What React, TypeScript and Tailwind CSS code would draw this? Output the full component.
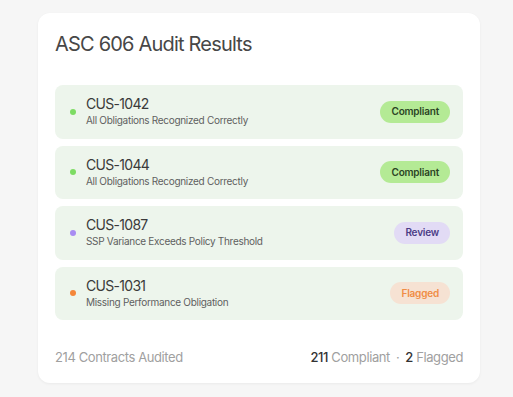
const rows = [
  { id: 'CUS-1042', text: 'All Obligations Recognized Correctly', status: 'Compliant' },
  { id: 'CUS-1044', text: 'All Obligations Recognized Correctly', status: 'Compliant' },
  { id: 'CUS-1087', text: 'SSP Variance Exceeds Policy Threshold', status: 'Review' },
  { id: 'CUS-1031', text: 'Missing Performance Obligation', status: 'Flagged' },
];

const dotColor: Record<string, string> = {
  Compliant: 'bg-[#7ddc63]',
  Review: 'bg-[#a88cf2]',
  Flagged: 'bg-[#f4873a]',
};

const badgeColor: Record<string, string> = {
  Compliant: 'bg-[#b4ea95] text-[#2b4424]',
  Review: 'bg-[#e2dbf5] text-[#4b3d86]',
  Flagged: 'bg-[#f6e2d3] text-[#f08d45]',
};

export default function App() {
  return (
    <div className="min-h-[397px] w-[513px] bg-[#f6f6f6] pt-[13px] pl-[38px] font-['Inter',sans-serif]">
      <div className="w-[442px] h-[370px] rounded-xl bg-white shadow-[0_1px_3px_rgba(0,0,0,0.05)] px-[17px] pt-[17px]">
        <h1 className="text-[20px] leading-[28px] text-[#474747] tracking-[-0.8px]">ASC 606 Audit Results</h1>

        <div className="mt-[27px] flex flex-col gap-[7px]">
          {rows.map((r) => (
            <div
              key={r.id}
              className="h-[53.5px] rounded-lg bg-[#edf5ec] flex items-center pl-[15px] pr-[13px]"
            >
              <span className={`w-[6px] h-[6px] rounded-full ${dotColor[r.status]}`} />
              <div className="ml-[10px] flex-1 -mt-[1px]">
                <div className="text-[14px] leading-[18px] text-[#3a3a3a] tracking-[-0.7px]">{r.id}</div>
                <div className="text-[10px] leading-[14px] text-[#5f5f5f] tracking-[-0.3px]">{r.text}</div>
              </div>
              <span
                className={`h-[22px] px-[11px] rounded-full flex items-center text-[10px] font-semibold tracking-[-0.2px] ${badgeColor[r.status]}`}
              >
                {r.status}
              </span>
            </div>
          ))}
        </div>

        <div className="mt-[28px] flex items-center justify-between text-[13px] text-[#a0a0a0] tracking-[-0.4px]">
          <span>214 Contracts Audited</span>
          <span>
            <span className="text-[#333] font-medium">211</span> Compliant
            <span className="mx-[6px]">·</span>
            <span className="text-[#333] font-medium">2</span> Flagged
          </span>
        </div>
      </div>
    </div>
  );
}
